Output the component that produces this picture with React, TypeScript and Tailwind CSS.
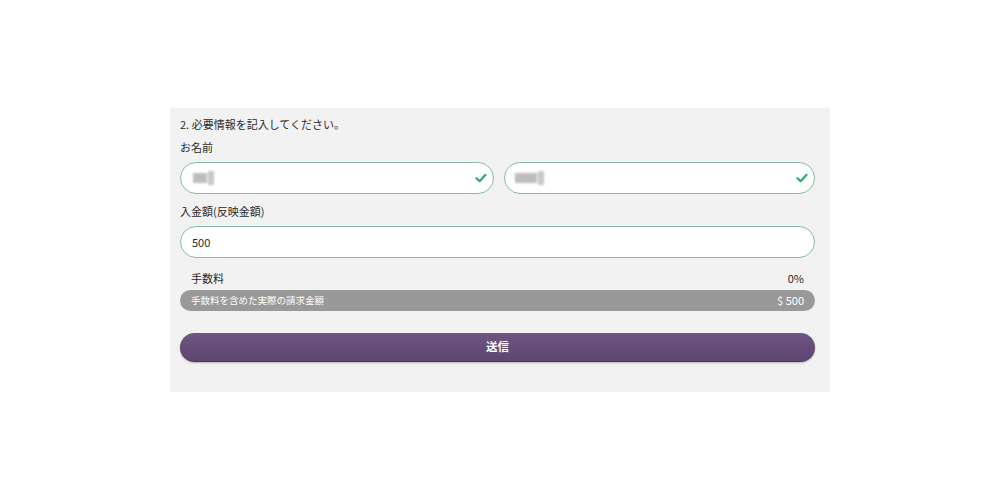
import React from "react";

const Check = () => (
  <svg width="12" height="10" viewBox="0 0 12 10" className="shrink-0">
    <path d="M1.5 5.2 L4.6 8.2 L10.5 1.8" fill="none" stroke="#22b06e" strokeWidth="2.2" strokeLinecap="round" strokeLinejoin="round" />
  </svg>
);

const Blur = ({ w }: { w: number }) => (
  <div className="flex items-center gap-[1px] blur-[1px]">
    <div className="h-[10px] bg-[#bdbdbd]" style={{ width: w }} />
    <div className="h-[14px] w-[6px] bg-[#c8c8c8]" />
  </div>
);

export default function App() {
  return (
    <div className="w-[1000px] h-[500px] bg-white pt-[108px] font-['Noto_Sans_CJK_JP','Noto_Sans',sans-serif] text-[#2a2a2a]">
      <div className="ml-[170px] w-[660px] h-[284px] bg-[#f2f2f2] pl-[10px] pr-[15px] pt-[8px]">
        <div className="text-[11px] leading-[16px]">2. 必要情報を記入してください。</div>
        <div className="mt-[7px] text-[11px] leading-[16px]">お名前</div>
        <div className="mt-[7px] flex gap-[10px]">
          <div className="flex-1 h-[32px] rounded-full border border-[#84bfa3] bg-white flex items-center justify-between pl-[12px] pr-[6px]">
            <Blur w={14} />
            <Check />
          </div>
          <div className="flex-1 h-[32px] rounded-full border border-[#84bfa3] bg-white flex items-center justify-between pl-[10px] pr-[6px]">
            <Blur w={22} />
            <Check />
          </div>
        </div>
        <div className="mt-[9px] text-[11px] leading-[16px]">入金額(反映金額)</div>
        <div className="mt-[7px] h-[32px] rounded-full border border-[#84bfa3] bg-white flex items-center pl-[11px] text-[11px]">
          500
        </div>
        <div className="mt-[12px] flex justify-between px-[11px] text-[11px] leading-[16px]">
          <span>手数料</span>
          <span>0%</span>
        </div>
        <div className="mt-[4px] h-[21px] rounded-full bg-[#999999] flex items-center justify-between pl-[11px] pr-[11px] text-white">
          <span className="text-[9.5px]">手数料を含めた実際の請求金額</span>
          <span className="text-[11px]">$ 500</span>
        </div>
        <button className="mt-[22px] w-full h-[29px] rounded-full bg-gradient-to-b from-[#6f5580] to-[#5e4470] border-b border-[#4b3559] shadow-[0_1px_2px_rgba(0,0,0,0.25)] text-white text-[11.5px] font-bold flex items-center justify-center">
          送信
        </button>
      </div>
    </div>
  );
}
